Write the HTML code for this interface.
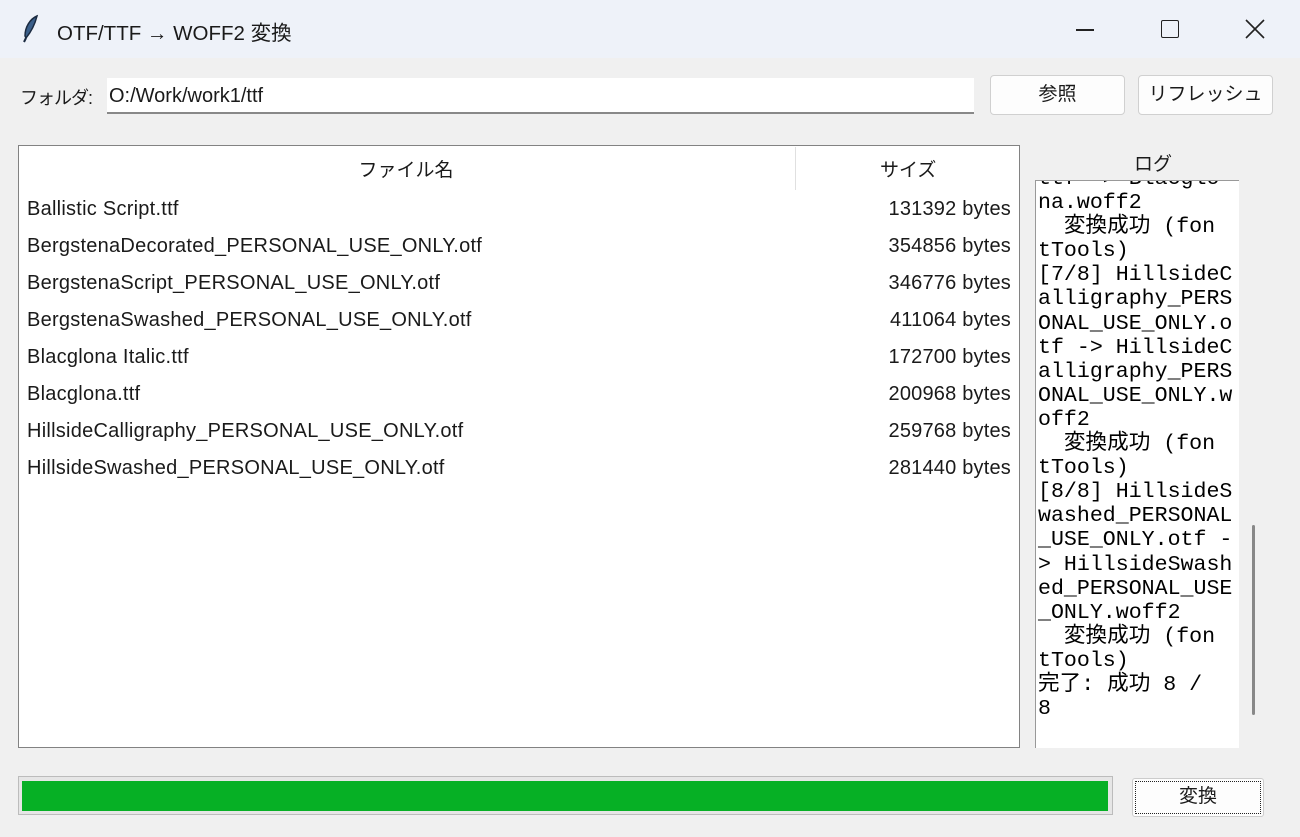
<!DOCTYPE html>
<html><head><meta charset="utf-8"><style>
*{margin:0;padding:0;box-sizing:border-box}
body{width:1300px;height:837px;overflow:hidden;background:#f0f0f0;font-family:"Liberation Sans","Noto Sans CJK JP",sans-serif;color:#1a1a1a;position:relative}
.a{position:absolute}
.title{left:0;top:0;width:1300px;height:58px;background:#eef2f9}
.btn{background:#fdfdfd;border:1px solid #d0d0d0;border-radius:4px;font-size:19px;text-align:center;line-height:38px}
.row{left:27px;font-size:20px;letter-spacing:0.25px;height:37px;line-height:37px}
.sz{right:289px;font-size:20px;letter-spacing:0.2px;height:37px;line-height:37px}
.log{font-family:"Liberation Mono","Noto Sans CJK JP",monospace;font-size:21.6px;line-height:24.1px;white-space:pre;color:#000}
</style></head><body>
<div class="a title"></div>
<svg class="a" style="left:20px;top:14px" width="22" height="30" viewBox="0 0 22 30"><path d="M17 2C10 5 5 13 5 22L6 24C11 18 15 10 17 2Z" fill="#3a5f8a" stroke="#1a2a40" stroke-width="1.5"/><path d="M6 24L4 28" stroke="#1a2a40" stroke-width="2"/></svg>
<div class="a" style="left:57px;top:16px;font-size:20.5px">OTF/TTF → WOFF2 変換</div>
<div class="a" style="left:1076px;top:29px;width:18px;height:1.5px;background:#222"></div>
<div class="a" style="left:1161px;top:20px;width:18px;height:18px;border:1.5px solid #222;border-radius:2px"></div>
<svg class="a" style="left:1245px;top:19px" width="20" height="20"><path d="M1 1L19 19M19 1L1 19" stroke="#222" stroke-width="1.6"/></svg>

<div class="a" style="left:20px;top:84px;font-size:18px;letter-spacing:-1px">フォルダ:</div>
<div class="a" style="left:107px;top:78px;width:867px;height:36px;background:#fff;border-bottom:2px solid #888;font-size:20px;line-height:36px;padding-left:2px">O:/Work/work1/ttf</div>
<div class="a btn" style="left:990px;top:75px;width:135px;height:40px">参照</div>
<div class="a btn" style="left:1138px;top:75px;width:135px;height:40px">リフレッシュ</div>

<div class="a" style="left:18px;top:145px;width:1002px;height:603px;background:#fff;border:1px solid #828282"></div>
<div class="a" style="left:795px;top:147px;width:1px;height:43px;background:#e0e0e0"></div>
<div class="a" style="left:0;top:155px;width:812px;text-align:center;font-size:19px">ファイル名</div>
<div class="a" style="left:880px;top:155px;font-size:19px">サイズ</div>
<div class="a row" style="top:191px">Ballistic Script.ttf</div>
<div class="a row" style="top:228px">BergstenaDecorated_PERSONAL_USE_ONLY.otf</div>
<div class="a row" style="top:265px">BergstenaScript_PERSONAL_USE_ONLY.otf</div>
<div class="a row" style="top:302px">BergstenaSwashed_PERSONAL_USE_ONLY.otf</div>
<div class="a row" style="top:339px">Blacglona Italic.ttf</div>
<div class="a row" style="top:376px">Blacglona.ttf</div>
<div class="a row" style="top:413px">HillsideCalligraphy_PERSONAL_USE_ONLY.otf</div>
<div class="a row" style="top:450px">HillsideSwashed_PERSONAL_USE_ONLY.otf</div>
<div class="a sz" style="top:191px">131392 bytes</div>
<div class="a sz" style="top:228px">354856 bytes</div>
<div class="a sz" style="top:265px">346776 bytes</div>
<div class="a sz" style="top:302px">411064 bytes</div>
<div class="a sz" style="top:339px">172700 bytes</div>
<div class="a sz" style="top:376px">200968 bytes</div>
<div class="a sz" style="top:413px">259768 bytes</div>
<div class="a sz" style="top:450px">281440 bytes</div>

<div class="a" style="left:1134px;top:149px;font-size:19px">ログ</div>
<div class="a" style="left:1035px;top:180px;width:204px;height:568px;background:#fff;border-left:1px solid #999;border-top:1px solid #999;overflow:hidden">
<div class="a log" style="left:2px;top:-14px">ttf -> Blacglo
na.woff2
  変換成功 (fon
tTools)
[7/8] HillsideC
alligraphy_PERS
ONAL_USE_ONLY.o
tf -> HillsideC
alligraphy_PERS
ONAL_USE_ONLY.w
off2
  変換成功 (fon
tTools)
[8/8] HillsideS
washed_PERSONAL
_USE_ONLY.otf -
> HillsideSwash
ed_PERSONAL_USE
_ONLY.woff2
  変換成功 (fon
tTools)
完了: 成功 8 /
8</div></div>
<div class="a" style="left:1252px;top:525px;width:3px;height:190px;background:#888;border-radius:2px"></div>

<div class="a" style="left:18px;top:776px;width:1095px;height:39px;border:1px solid #bcbcbc;background:#e6e6e6"></div>
<div class="a" style="left:22px;top:781px;width:1086px;height:30px;background:#06b025"></div>
<div class="a" style="left:1132px;top:778px;width:132px;height:39px;background:#fdfdfd;border:1px solid #ccc;border-radius:3px"></div>
<div class="a" style="left:1135px;top:781px;width:126px;height:33px;border:1.5px dotted #222;font-size:19px;text-align:center;line-height:30px">変換</div>
</body></html>
